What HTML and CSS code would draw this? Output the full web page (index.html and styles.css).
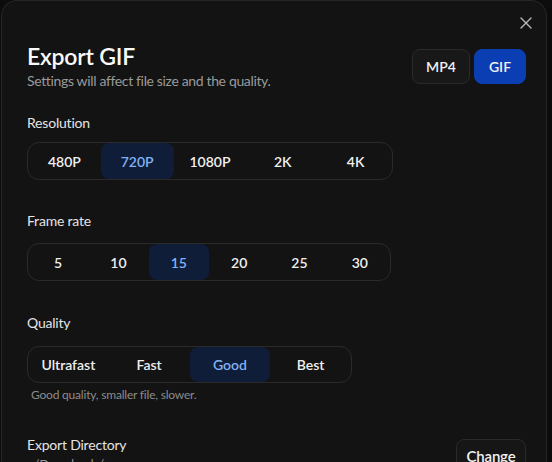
FILE: index.html
```html
<!DOCTYPE html>
<html lang="en">
<head>
  <meta charset="UTF-8">
  <meta name="viewport" content="width=device-width, initial-scale=1.0">
  <title>Export GIF</title>
  <link rel="stylesheet" href="styles.css">
</head>
<body>
  <div class="dialog">
    <button class="close-btn" aria-label="Close">
      <svg width="12" height="12" viewBox="0 0 12 12"><path d="M1 1 L11 11 M11 1 L1 11" stroke="currentColor" stroke-width="1.4" stroke-linecap="round"/></svg>
    </button>

    <div class="header">
      <div class="title-block">
        <h1>Export GIF</h1>
        <p class="subtitle">Settings will affect file size and the quality.</p>
      </div>
      <div class="format-switch">
        <button class="format-btn">MP4</button>
        <button class="format-btn active">GIF</button>
      </div>
    </div>

    <div class="section section-res">
      <div class="label">Resolution</div>
      <div class="segmented seg-res">
        <button>480P</button>
        <button class="selected">720P</button>
        <button>1080P</button>
        <button>2K</button>
        <button>4K</button>
      </div>
    </div>

    <div class="section section-fps">
      <div class="label">Frame rate</div>
      <div class="segmented seg-fps">
        <button>5</button>
        <button>10</button>
        <button class="selected">15</button>
        <button>20</button>
        <button>25</button>
        <button>30</button>
      </div>
    </div>

    <div class="section section-quality">
      <div class="label">Quality</div>
      <div class="segmented seg-quality">
        <button>Ultrafast</button>
        <button>Fast</button>
        <button class="selected">Good</button>
        <button>Best</button>
      </div>
      <p class="hint">Good quality, smaller file, slower.</p>
    </div>

    <div class="directory-row">
      <div>
        <div class="label">Export Directory</div>
        <div class="path">~/Downloads/</div>
      </div>
      <button class="change-btn">Change</button>
    </div>
  </div>
</body>
</html>
```

FILE: styles.css
```css
:root {
  --bg: #0c0c0c;
  --panel: #131313;
  --border: #2a2a2a;
  --text: #f2f2f2;
  --muted: #9a9a9a;
  --accent: #0b3db3;
  --selected-bg: #101d38;
  --selected-text: #7fb2f4;
}

* {
  box-sizing: border-box;
  margin: 0;
  padding: 0;
}

body {
  background: var(--bg);
  font-family: 'Lato', 'Noto Sans', sans-serif;
  color: var(--text);
  overflow: hidden;
}

button {
  font-family: inherit;
  background: none;
  border: none;
  color: inherit;
  cursor: pointer;
}

.dialog {
  position: relative;
  margin-left: 1px;
  width: 546px;
  height: 480px;
  background: var(--panel);
  border: 1px solid #262626;
  border-bottom: none;
  border-radius: 16px 16px 0 0;
  padding: 40px 20px 0 25px;
}

.close-btn {
  position: absolute;
  top: 15px;
  right: 13px;
  width: 14px;
  height: 14px;
  color: #b8b8b8;
  display: flex;
  align-items: center;
  justify-content: center;
}

.header {
  display: flex;
  justify-content: space-between;
  align-items: center;
}

h1 {
  font-size: 23px;
  line-height: 30px;
  font-weight: 600;
  letter-spacing: -0.2px;
  color: #fafafa;
}

.subtitle {
  font-size: 14px;
  line-height: 20px;
  letter-spacing: -0.35px;
  color: var(--muted);
}

.format-switch {
  display: flex;
  gap: 4px;
}

.format-btn {
  height: 35px;
  width: 58px;
  border-radius: 8px;
  border: 1px solid var(--border);
  background: #181818;
  font-size: 14px;
  font-weight: 600;
}

.format-btn.active {
  width: 52px;
  background: var(--accent);
  border-color: var(--accent);
}

.section {
  margin-top: 22px;
}

.section-fps {
  margin-top: 31px;
}

.section-quality {
  margin-top: 32px;
}

.label {
  font-size: 14px;
  line-height: 20px;
  letter-spacing: -0.2px;
  color: #e4e4e4;
}

.segmented {
  display: grid;
  margin-top: 9px;
  height: 38px;
  border: 1px solid var(--border);
  border-radius: 12px;
}

.seg-res {
  width: 366px;
  grid-template-columns: repeat(5, 1fr);
}

.seg-fps {
  width: 364px;
  grid-template-columns: repeat(6, 1fr);
  margin-top: 12px;
}

.seg-quality {
  width: 325px;
  height: 37px;
  grid-template-columns: repeat(4, 1fr);
  margin-top: 13px;
}

.segmented button {
  font-size: 14px;
  font-weight: 600;
  border-radius: 8px;
  color: #f0f0f0;
}

.segmented button.selected {
  background: var(--selected-bg);
  color: var(--selected-text);
}

.hint {
  margin-top: 3px;
  padding-left: 4px;
  font-size: 12px;
  line-height: 18px;
  letter-spacing: -0.2px;
  color: #8c8c8c;
}

.directory-row {
  display: flex;
  justify-content: space-between;
  align-items: flex-start;
  margin-top: 31px;
}

.path {
  font-size: 12px;
  line-height: 18px;
  color: var(--muted);
}

.change-btn {
  margin-top: 4px;
  height: 34px;
  width: 70px;
  border-radius: 8px;
  border: 1px solid var(--border);
  background: #161616;
  font-size: 15px;
  font-weight: 600;
  letter-spacing: -0.2px;
}
```
